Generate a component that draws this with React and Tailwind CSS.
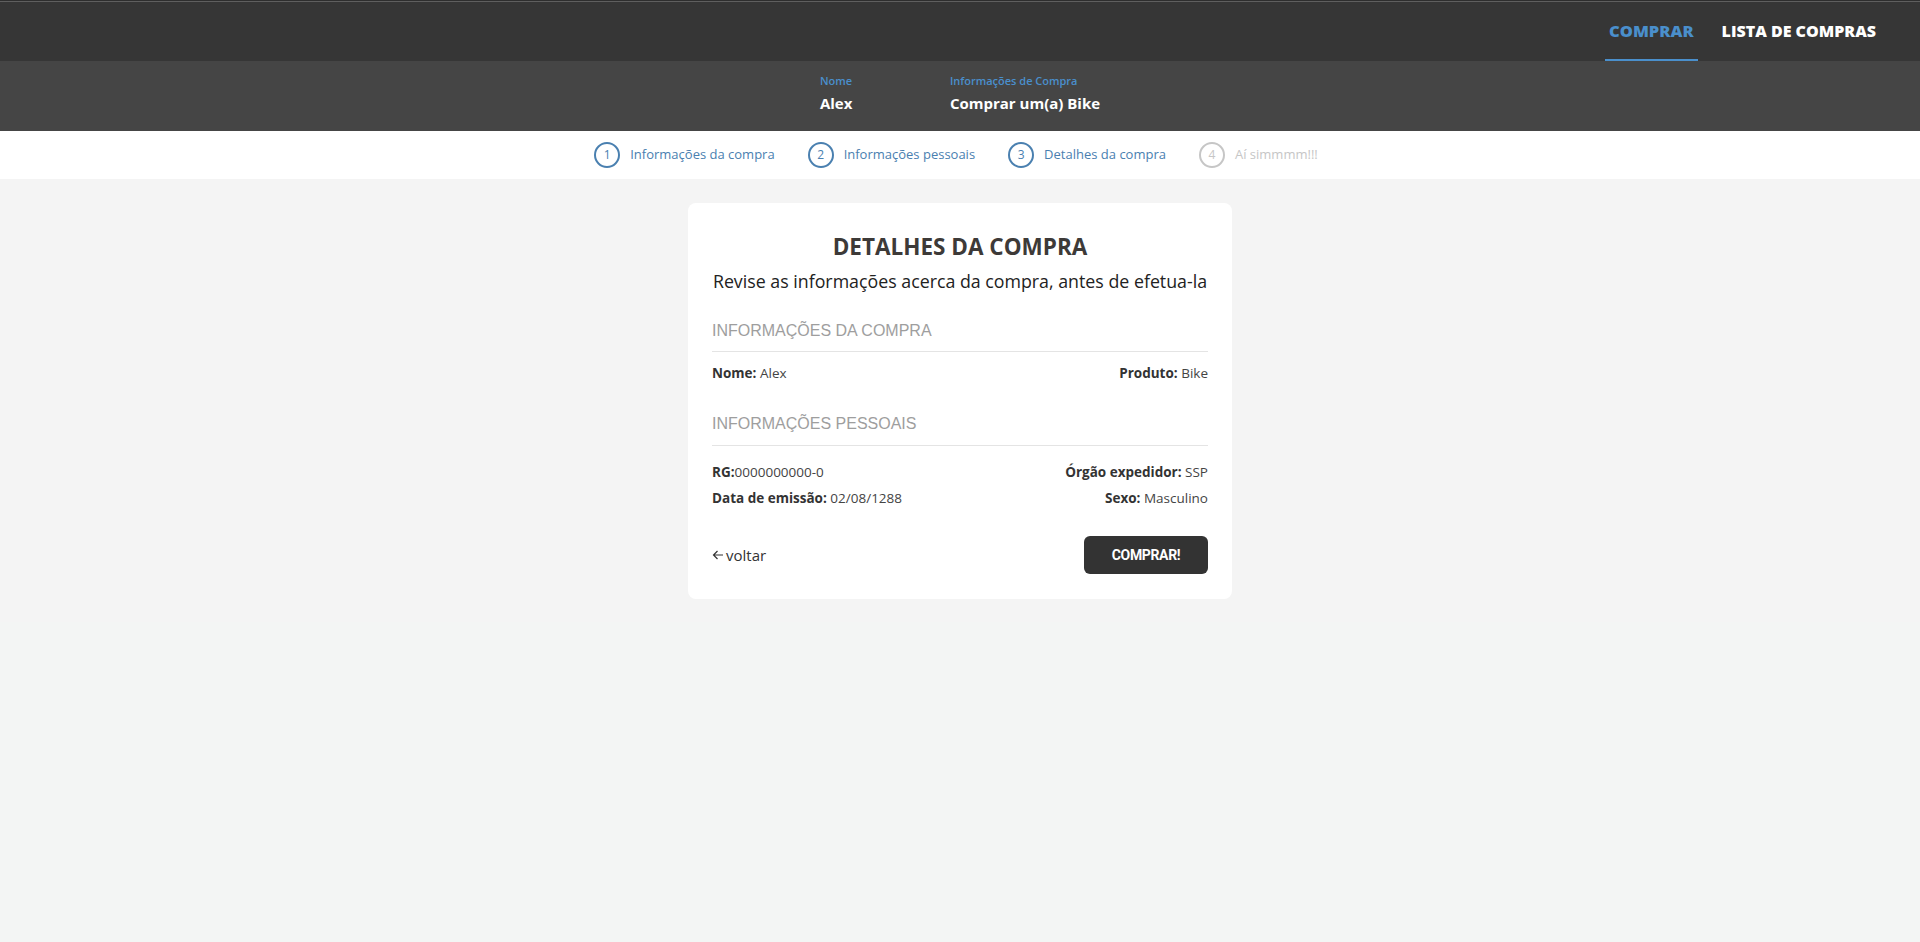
import React from "react";

const F = { fontFamily: '"Open Sans", "Liberation Sans", sans-serif' };
const H = { fontFamily: '"Liberation Sans", Arial, sans-serif' };

function Step({ n, label, active }) {
  const c = active ? "text-[#4a80b0] border-[#4a80b0]" : "text-[#c6c6c6] border-[#c6c6c6]";
  return (
    <div className="flex items-center gap-[10px]">
      <div className={`w-[26px] h-[26px] rounded-full border-2 flex items-center justify-center text-[12px] ${c}`}>
        {n}
      </div>
      <span className={`text-[13px] ${active ? "text-[#4a80b0]" : "text-[#c6c6c6]"}`}>{label}</span>
    </div>
  );
}

function Field({ k, v, right, noSpace }) {
  return (
    <span className={`text-[13.5px] text-[#444] ${right ? "text-right" : ""}`}>
      <b className="font-bold text-[#333]">{k}</b>
      {noSpace ? "" : " "}
      {v}
    </span>
  );
}

export default function App() {
  return (
    <div className="min-h-screen bg-[#f3f5f4] flex flex-col" style={F}>
      <div className="h-px bg-[#2e2e2e]" />
      <div className="h-px bg-[#5f5f5f]" />
      <header className="h-[59px] bg-[#363636] flex justify-end pr-10 gap-5">
        <a className="flex items-center h-full px-1 border-b-2 border-[#4a8fcc] text-[#4a8fcc] text-[16.5px] font-extrabold pt-[1px]">
          COMPRAR
        </a>
        <a className="flex items-center h-full px-1 border-b-2 border-transparent text-white text-[16px] font-extrabold pt-[1px]">
          LISTA DE COMPRAS
        </a>
      </header>
      <div className="h-[70px] bg-[#454545] flex justify-center pt-[12px]">
        <div className="w-[130px] flex flex-col">
          <span className="text-[11px] font-semibold text-[#4a8fcc] leading-4">Nome</span>
          <span className="text-[15px] font-bold text-white leading-[22px] mt-[3px]">Alex</span>
        </div>
        <div className="flex flex-col">
          <span className="text-[11px] font-semibold text-[#4a8fcc] leading-4">Informações de Compra</span>
          <span className="text-[15px] font-bold text-white leading-[22px] mt-[3px]">Comprar um(a) Bike</span>
        </div>
      </div>
      <div className="h-[48px] bg-white flex items-center justify-center gap-[33px] pr-[8px]">
        <Step n="1" label="Informações da compra" active />
        <Step n="2" label="Informações pessoais" active />
        <Step n="3" label="Detalhes da compra" active />
        <Step n="4" label="Aí simmmm!!!" />
      </div>
      <main className="bg-[#f4f4f4] pt-6 pb-[23px]">
        <div className="w-[544px] mx-auto bg-white rounded-lg px-6 pt-7 pb-[25px]">
          <h1 className="text-center text-[22.5px] leading-8 font-bold text-[#3d3a38]">DETALHES DA COMPRA</h1>
          <p className="text-center text-[17.8px] leading-6 text-[#222] mt-[6px]">
            Revise as informações acerca da compra, antes de efetua-la
          </p>
          <div className="mt-[26px] pb-2 border-b border-[#e4e4e4] text-[16px] leading-6 text-[#9e9e9e]" style={H}>
            INFORMAÇÕES DA COMPRA
          </div>
          <div className="flex justify-between mt-[11px] leading-5">
            <Field k="Nome:" v="Alex" />
            <Field k="Produto:" v="Bike" right />
          </div>
          <div className="mt-[29px] pb-[9px] border-b border-[#e4e4e4] text-[16px] leading-6 text-[#9e9e9e]" style={H}>
            INFORMAÇÕES PESSOAIS
          </div>
          <div className="flex justify-between mt-[16px] leading-5">
            <Field k="RG:" v="0000000000-0" noSpace />
            <Field k="Órgão expedidor:" v="SSP" right />
          </div>
          <div className="flex justify-between mt-[6px] leading-5">
            <Field k="Data de emissão:" v="02/08/1288" />
            <Field k="Sexo:" v="Masculino" right />
          </div>
          <div className="flex justify-between items-center mt-[28px]">
            <button className="flex items-center text-[15px] text-[#333] gap-[2px]">
              <svg width="12" height="12" viewBox="0 0 12 12" fill="none" stroke="#333" strokeWidth="1.2">
                <path d="M11 6H1.5M5.5 2L1.5 6l4 4" />
              </svg>
              voltar
            </button>
            <button
              className="w-[124px] h-[38px] rounded-md bg-[#333] text-white text-[14px] font-bold tracking-tight"
              style={{ fontFamily: 'Roboto, "Liberation Sans", sans-serif' }}
            >
              COMPRAR!
            </button>
          </div>
        </div>
      </main>
    </div>
  );
}
